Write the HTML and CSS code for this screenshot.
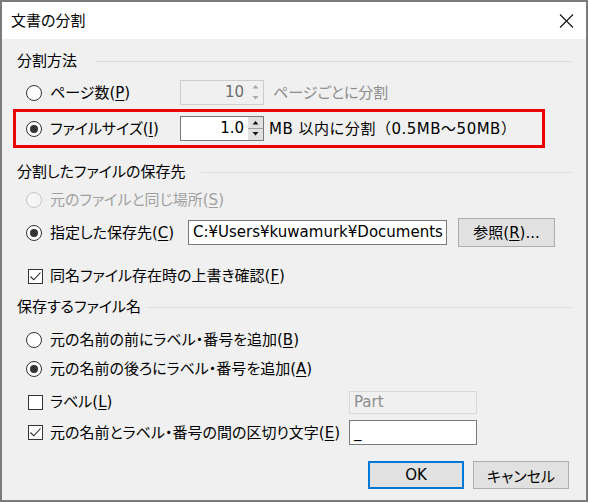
FILE: index.html
```html
<!DOCTYPE html>
<html lang="ja">
<head>
<meta charset="utf-8">
<link rel="stylesheet" href="styles.css">
</head>
<body>
<div class="window">
  <div class="titlebar">
    <span class="title">文書の分割</span>
    <svg class="close" width="15" height="14" viewBox="0 0 15 14"><path d="M1 0.5 L14 13.5 M14 0.5 L1 13.5" stroke="#111" stroke-width="1.1" fill="none"/></svg>
  </div>
  <div class="content">
    <div class="ghead g1"><span>分割方法</span></div>

    <div class="row r1">
      <span class="radio"></span>
      <span class="lbl w130">ページ数(<u>P</u>)</span>
      <div class="spin dis">
        <span class="val">10</span>
        <svg class="arrows" width="15" height="23" viewBox="0 0 15 23"><rect x="0" y="0" width="15" height="11" fill="#f0f0f0"/><rect x="0" y="12" width="15" height="11" fill="#f0f0f0"/><path d="M4.5 7.5 L7.5 4 L10.5 7.5 Z" fill="#a8a8a8"/><path d="M4.5 15 L7.5 18.5 L10.5 15 Z" fill="#a8a8a8"/></svg>
      </div>
      <span class="after dim">ページごとに分割</span>
    </div>

    <div class="redbox">
      <div class="row inner">
        <span class="radio on"></span>
        <span class="lbl w130">ファイルサイズ(<u>I</u>)</span>
        <div class="spin">
          <span class="val">1.0</span>
          <svg class="arrows" width="15" height="23" viewBox="0 0 15 23"><rect x="0" y="0" width="15" height="11" fill="#e1e1e1"/><rect x="0" y="12" width="15" height="11" fill="#e1e1e1"/><rect x="0" y="11" width="15" height="1" fill="#a0a0a0"/><path d="M4.5 7.5 L7.5 4 L10.5 7.5 Z" fill="#111"/><path d="M4.5 15 L7.5 18.5 L10.5 15 Z" fill="#111"/></svg>
        </div>
        <span class="after2">MB 以内に分割（0.5MB～50MB）</span>
      </div>
    </div>

    <div class="ghead g2"><span>分割したファイルの保存先</span></div>

    <div class="row r3">
      <span class="radio dis"></span>
      <span class="lbl dim">元のファイルと同じ場所(<u>S</u>)</span>
    </div>

    <div class="row r4">
      <span class="radio on"></span>
      <span class="lbl w138">指定した保存先(<u>C</u>)</span>
      <div class="textbox path">C:¥Users¥kuwamurk¥Documents</div>
      <div class="btn browse">参照(<u>R</u>)...</div>
    </div>

    <div class="row r5">
      <span class="check on"><svg width="13" height="13" viewBox="0 0 13 13"><path d="M1.5 6.5 L4.8 9.8 L11.5 2.5" stroke="#222" stroke-width="1.1" fill="none"/></svg></span>
      <span class="lbl">同名ファイル存在時の上書き確認(<u>F</u>)</span>
    </div>

    <div class="ghead g3"><span>保存するファイル名</span></div>

    <div class="row r6">
      <span class="radio"></span>
      <span class="lbl">元の名前の前にラベル・番号を追加(<u>B</u>)</span>
    </div>

    <div class="row r7">
      <span class="radio on"></span>
      <span class="lbl">元の名前の後ろにラベル・番号を追加(<u>A</u>)</span>
    </div>

    <div class="row r8">
      <span class="check"></span>
      <span class="lbl w299">ラベル(<u>L</u>)</span>
      <div class="textbox small dis">Part</div>
    </div>

    <div class="row r9">
      <span class="check on"><svg width="13" height="13" viewBox="0 0 13 13"><path d="M1.5 6.5 L4.8 9.8 L11.5 2.5" stroke="#222" stroke-width="1.1" fill="none"/></svg></span>
      <span class="lbl w299">元の名前とラベル・番号の間の区切り文字(<u>E</u>)</span>
      <div class="textbox small sep">_</div>
    </div>

    <div class="buttons">
      <div class="btn dlg default">OK</div>
      <div class="btn dlg">キャンセル</div>
    </div>
  </div>
</div>
</body>
</html>
```

FILE: styles.css
```css
* { box-sizing: border-box; }

body {
  margin: 0;
  background: #ffffff;
  font-family: "DejaVu Sans", "Noto Sans CJK JP", sans-serif;
  font-size: 15px;
  font-weight: 400;
  color: #000;
  font-feature-settings: "palt";
}

u { text-decoration: underline; text-underline-offset: 2px; text-decoration-thickness: 1px; }

.window {
  width: 588px;
  height: 502px;
  border: 2px solid #7b7b7b;
  background: #f0f0f0;
  display: flex;
  flex-direction: column;
}

.titlebar {
  flex: none;
  height: 37px;
  background: #ffffff;
  display: flex;
  align-items: center;
  justify-content: space-between;
  padding-left: 9px;
  padding-right: 12px;
  font-size: 15px;
}

.title { line-height: 20px; }
.close { display: block; }

.content {
  display: flex;
  flex-direction: column;
  padding-right: 15px;
}

.ghead {
  display: flex;
  align-items: center;
  height: 22px;
  margin-left: 15px;
  line-height: 22px;
}
.ghead::after {
  content: "";
  flex: 1;
  height: 1px;
  background: #dcdcdc;
}
.g1 { margin-top: 11px; gap: 18px; }
.g2 { margin-top: 13px; gap: 16px; }
.g3 { margin-top: 8px; gap: 6px; }

.row {
  display: flex;
  align-items: center;
  margin-left: 24px;
  height: 25px;
  line-height: 20px;
}

.r1 { margin-top: 8px; }
.r3 { margin-top: 5px; height: 24px; }
.r4 { margin-top: 6px; height: 29px; }
.r5 { margin-top: 17px; height: 24px; }
.r6 { margin-top: 10px; height: 24px; }
.r7 { margin-top: 5px; height: 24px; }
.r8 { margin-top: 9px; height: 24px; }
.r9 { margin-top: 6px; height: 25px; }

.redbox {
  margin-top: 4px;
  margin-left: 11px;
  width: 532px;
  height: 39px;
  border: 3px solid #ec0000;
  display: flex;
  align-items: center;
}
.row.inner { margin-left: 10px; }

.radio {
  flex: none;
  width: 16px;
  height: 16px;
  border: 1px solid #333;
  border-radius: 50%;
  background: #fff;
  margin-right: 8px;
  display: flex;
  align-items: center;
  justify-content: center;
}
.radio.on::after {
  content: "";
  width: 8px;
  height: 8px;
  border-radius: 50%;
  background: #333;
}
.radio.dis {
  border-color: #c6c6c6;
  background: #f6f6f6;
}

.check {
  flex: none;
  width: 15px;
  height: 15px;
  border: 1px solid #333;
  background: #fff;
  margin-left: 2px;
  margin-right: 7px;
  display: flex;
  align-items: center;
  justify-content: center;
}
.check svg { display: block; }

.lbl { white-space: nowrap; }
.w130 { width: 130px; }
.w138 { width: 138px; }
.w299 { width: 299px; }
.dim { color: #a0a0a0; }

.spin {
  flex: none;
  display: flex;
  width: 84px;
  height: 25px;
  border: 1px solid #7a7a7a;
  background: #fff;
}
.spin.dis {
  border-color: #cccccc;
  background: #f0f0f0;
  color: #6d6d6d;
}
.spin .val {
  flex: 1;
  text-align: right;
  padding-right: 4px;
  line-height: 23px;
}
.spin .arrows { display: block; flex: none; }

.after { margin-left: 9px; white-space: nowrap; color: #8d8d8d; }
.after2 { margin-left: 5px; white-space: nowrap; font-feature-settings: normal; letter-spacing: 0.5px; }

.textbox {
  flex: none;
  height: 25px;
  border: 1px solid #7a7a7a;
  background: #fff;
  padding-left: 4px;
  line-height: 23px;
  white-space: nowrap;
  overflow: hidden;
}
.textbox.path { width: 259px; }
.textbox.small { width: 128px; }
.textbox.dis {
  height: 23px;
  line-height: 21px;
  border-color: #d9d9d9;
  background: #f0f0f0;
  color: #8d8d8d;
}

.btn {
  flex: none;
  display: flex;
  align-items: center;
  justify-content: center;
  background: #e1e1e1;
  border: 1px solid #adadad;
  white-space: nowrap;
}
.btn.browse {
  margin-left: 11px;
  width: 97px;
  height: 29px;
}

.buttons {
  display: flex;
  justify-content: flex-end;
  gap: 9px;
  margin-top: 16px;
  padding-right: 2px;
}
.btn.dlg {
  width: 96px;
  height: 28px;
}
.btn.default {
  border: 1px solid #0078d7;
  box-shadow: inset 0 0 0 1px #0078d7;
}
```
